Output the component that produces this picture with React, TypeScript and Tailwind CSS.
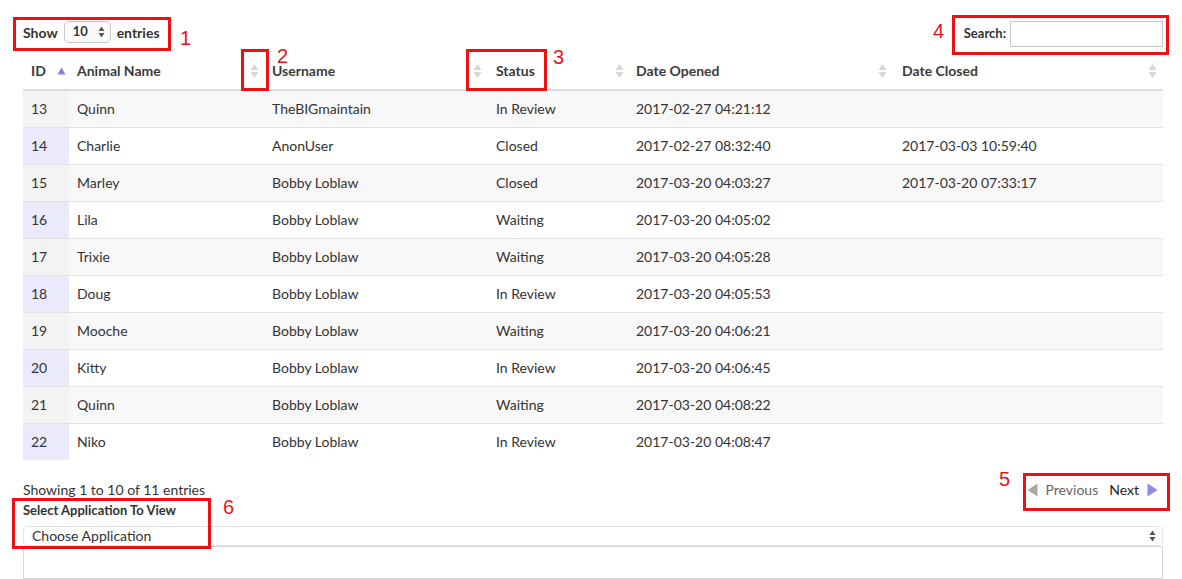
const rows = [
  { id: 13, name: "Quinn", user: "TheBIGmaintain", status: "In Review", opened: "2017-02-27 04:21:12", closed: "" },
  { id: 14, name: "Charlie", user: "AnonUser", status: "Closed", opened: "2017-02-27 08:32:40", closed: "2017-03-03 10:59:40" },
  { id: 15, name: "Marley", user: "Bobby Loblaw", status: "Closed", opened: "2017-03-20 04:03:27", closed: "2017-03-20 07:33:17" },
  { id: 16, name: "Lila", user: "Bobby Loblaw", status: "Waiting", opened: "2017-03-20 04:05:02", closed: "" },
  { id: 17, name: "Trixie", user: "Bobby Loblaw", status: "Waiting", opened: "2017-03-20 04:05:28", closed: "" },
  { id: 18, name: "Doug", user: "Bobby Loblaw", status: "In Review", opened: "2017-03-20 04:05:53", closed: "" },
  { id: 19, name: "Mooche", user: "Bobby Loblaw", status: "Waiting", opened: "2017-03-20 04:06:21", closed: "" },
  { id: 20, name: "Kitty", user: "Bobby Loblaw", status: "In Review", opened: "2017-03-20 04:06:45", closed: "" },
  { id: 21, name: "Quinn", user: "Bobby Loblaw", status: "Waiting", opened: "2017-03-20 04:08:22", closed: "" },
  { id: 22, name: "Niko", user: "Bobby Loblaw", status: "In Review", opened: "2017-03-20 04:08:47", closed: "" },
];

const SortBoth = () => (
  <svg width="9" height="16" viewBox="0 0 9 16" className="shrink-0">
    <path d="M4.5 1 L8.5 7 L0.5 7 Z" fill="#d6d6d6" />
    <path d="M4.5 15 L8.5 9 L0.5 9 Z" fill="#d6d6d6" />
  </svg>
);

const SortAsc = () => (
  <svg width="9" height="8" viewBox="0 0 9 8" className="shrink-0">
    <path d="M4.5 0.5 L8.5 7.5 L0.5 7.5 Z" fill="#8080dd" />
  </svg>
);

const Mark = ({ n, cls }: { n: string; cls: string }) => (
  <span className={`absolute text-[20px] leading-none text-[#e8141b] ${cls}`} style={{ fontFamily: "'Liberation Sans', Arial, sans-serif" }}>
    {n}
  </span>
);

const Box = ({ cls }: { cls: string }) => (
  <div className={`pointer-events-none absolute border-[3px] border-[#ee1111] ${cls}`} />
);

const App = () => {
  return (
    <div className="relative h-[579px] w-[1182px] overflow-hidden bg-white text-[14px] text-[#333]" style={{ fontFamily: "Lato, 'Open Sans', sans-serif" }}>
      <div className="pl-[23px] pr-[19px] pt-[19px]">
        <div className="flex h-[26px] items-center justify-between">
          <div className="flex items-center gap-[6px] font-bold">
            <span>Show</span>
            <div className="flex h-[22px] w-[47px] items-center justify-between rounded-[5px] border border-[#c8c8c8] bg-[#fafafa] pl-[8px] pr-[5px] text-[13px]">
              <span>10</span>
              <svg width="7" height="12" viewBox="0 0 7 12">
                <path d="M3.5 0.5 L6.5 5 L0.5 5 Z" fill="#555" />
                <path d="M3.5 11.5 L6.5 7 L0.5 7 Z" fill="#555" />
              </svg>
            </div>
            <span>entries</span>
          </div>
          <div className="mt-[3px] flex items-center gap-[4px] font-bold">
            <span className="text-[13px]">Search:</span>
            <div className="h-[26px] w-[153px] border border-[#c8c8c8] bg-white" />
          </div>
        </div>

        <table className="mt-[7px] w-[1140px] table-fixed border-collapse">
          <colgroup>
            <col className="w-[46px]" />
            <col className="w-[195px]" />
            <col className="w-[224px]" />
            <col className="w-[140px]" />
            <col className="w-[265px]" />
            <col className="w-[270px]" />
          </colgroup>
          <thead>
            <tr className="h-[38px] border-b-2 border-[#dcdcdc] text-left font-bold text-[#3b3b3b]">
              <th className="pl-[8px]"><div className="flex items-center gap-[11px]"><span>ID</span><SortAsc /></div></th>
              <th className="pl-[8px] pr-[5px]"><div className="flex items-center justify-between"><span>Animal Name</span><SortBoth /></div></th>
              <th className="pl-[8px] pr-[6px]"><div className="flex items-center justify-between"><span>Username</span><SortBoth /></div></th>
              <th className="pl-[8px] pr-[4px]"><div className="flex items-center justify-between"><span>Status</span><SortBoth /></div></th>
              <th className="pl-[8px] pr-[6px]"><div className="flex items-center justify-between"><span>Date Opened</span><SortBoth /></div></th>
              <th className="pl-[9px] pr-[6px]"><div className="flex items-center justify-between"><span>Date Closed</span><SortBoth /></div></th>
            </tr>
          </thead>
          <tbody>
            {rows.map((r, i) => {
              const odd = i % 2 === 0;
              return (
                <tr key={r.id} className={`h-[37px] ${i < rows.length - 1 ? "border-b border-[#e2e2e2]" : ""} ${odd ? "bg-[#f8f8f8]" : "bg-white"}`}>
                  <td className={`pl-[8px] ${odd ? "bg-[#f3f3f3]" : "bg-[#eaeafa]"}`}>{r.id}</td>
                  <td className="pl-[8px]">{r.name}</td>
                  <td className="pl-[8px]">{r.user}</td>
                  <td className="pl-[8px]">{r.status}</td>
                  <td className="pl-[8px]">{r.opened}</td>
                  <td className="pl-[9px]">{r.closed}</td>
                </tr>
              );
            })}
          </tbody>
        </table>

        <div className="mt-[19px] flex items-center justify-between">
          <span className="text-[#333]">Showing 1 to 10 of 11 entries</span>
          <div className="mr-[5px] flex items-center gap-[8px]">
            <svg width="11" height="14" viewBox="0 0 11 14"><path d="M0.5 7 L10.5 0.5 L10.5 13.5 Z" fill="#a8a8a8" /></svg>
            <span className="text-[#666]">Previous</span>
            <span className="ml-[3px] text-[#222]">Next</span>
            <svg width="11" height="14" viewBox="0 0 11 14"><path d="M10.5 7 L0.5 0.5 L0.5 13.5 Z" fill="#8a8ae8" /></svg>
          </div>
        </div>
        <div className="mt-[1px] text-[13px] font-bold">Select Application To View</div>
        <div className="mt-[5px] flex h-[20px] items-center justify-between rounded-[5px] border border-[#e3e3e3] bg-white pl-[8px] pr-[6px]">
          <span>Choose Application</span>
          <svg width="7" height="12" viewBox="0 0 7 12">
            <path d="M3.5 0.5 L6.5 5 L0.5 5 Z" fill="#555" />
            <path d="M3.5 11.5 L6.5 7 L0.5 7 Z" fill="#555" />
          </svg>
        </div>
        <div className="h-[33px] border border-[#d8d8d8]" />
      </div>

      <Box cls="left-[13px] top-[17px] h-[34px] w-[158px]" />
      <Mark n="1" cls="left-[180px] top-[28px]" />
      <Box cls="left-[241px] top-[49px] h-[42px] w-[28px]" />
      <Mark n="2" cls="left-[277px] top-[46px]" />
      <Box cls="left-[466px] top-[49px] h-[42px] w-[81px]" />
      <Mark n="3" cls="left-[553px] top-[47px]" />
      <Box cls="left-[952px] top-[15px] h-[40px] w-[217px]" />
      <Mark n="4" cls="left-[933px] top-[21px]" />
      <Box cls="left-[1023px] top-[473px] h-[38px] w-[147px]" />
      <Mark n="5" cls="left-[999px] top-[469px]" />
      <Box cls="left-[12px] top-[498px] h-[51px] w-[199px]" />
      <Mark n="6" cls="left-[223px] top-[497px]" />
    </div>
  );
};

export default App;
